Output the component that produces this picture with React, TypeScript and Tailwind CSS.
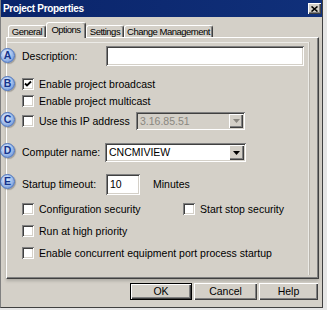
import type { ReactNode } from 'react';

const raised = 'shadow-[inset_1px_1px_0_#ffffff,inset_-1px_-1px_0_#404040,inset_-2px_-2px_0_#808080]';
const sunken = 'shadow-[inset_1px_1px_0_#808080,inset_-1px_-1px_0_#ffffff,inset_2px_2px_0_#404040,inset_-2px_-2px_0_#d4d0c8]';

function Badge({ letter, className }: { letter: string; className: string }) {
  return (
    <div
      className={`absolute left-[-7px] w-[15px] h-[15px] rounded-full border border-[#4a72bd] bg-[radial-gradient(circle_at_40%_35%,#e4eefb_0%,#a9c4ee_45%,#5d86cf_100%)] shadow-[1px_1px_1px_rgba(0,0,0,0.25)] flex items-center justify-center text-[10.5px] font-bold leading-none text-[#15338c] ${className}`}
    >
      {letter}
    </div>
  );
}

function Checkbox({ checked = false }: { checked?: boolean }) {
  return (
    <div className={`w-[12px] h-[12px] shrink-0 bg-white flex items-center justify-center ${sunken}`}>
      {checked && (
        <svg width="8" height="8" viewBox="0 0 8 8">
          <path d="M1 3.5 L3 5.5 L7 1.5" fill="none" stroke="#000" strokeWidth={1.8} />
        </svg>
      )}
    </div>
  );
}

function Arrow({ color }: { color: string }) {
  return (
    <svg width="7" height="4" viewBox="0 0 7 4">
      <polygon points="0,0 7,0 3.5,4" fill={color} />
    </svg>
  );
}

function CheckRow({ label, checked, className = '', children }: { label: string; checked?: boolean; className?: string; children?: ReactNode }) {
  return (
    <div className={`relative flex items-center h-[14px] pl-[15px] ${className}`}>
      {children}
      <Checkbox checked={checked} />
      <span className="ml-[5px] whitespace-nowrap">{label}</span>
    </div>
  );
}

function Tab({ label, active = false, className }: { label: string; active?: boolean; className: string }) {
  return (
    <div
      className={`flex items-center justify-center bg-[#d4d0c8] rounded-t-[3px] border-t border-l border-white border-r border-r-[#404040] shadow-[inset_-1px_0_0_#808080] text-[9.5px] tracking-[-0.5px] whitespace-nowrap ${
        active ? 'h-[16px] -mb-[1px] relative z-10 pb-[2px]' : 'h-[12px]'
      } ${className}`}
    >
      {label}
    </div>
  );
}

export default function App() {
  return (
    <div className="w-[327px] h-[310px] bg-[#e6e6e6] font-['Liberation_Sans',Arial,sans-serif] text-black text-[10.5px] leading-none overflow-hidden">
      <div className="w-[323px] h-[308px] bg-[#d4d0c8] border-l border-l-[#808080] border-r border-r-[#404040] border-b border-b-[#404040] flex flex-col">
        {/* Title bar */}
        <div className="h-[17px] bg-gradient-to-r from-[#0a246a] to-[#10307a] flex items-center justify-between pl-[2px] pr-[1px]">
          <span className="text-white font-bold text-[10px] tracking-[-0.3px]">Project Properties</span>
          <div className={`w-[13px] h-[11px] bg-[#d4d0c8] flex items-center justify-center ${raised}`}>
            <svg width="7" height="6" viewBox="0 0 7 6">
              <path d="M0.5 0.5 L6.5 5.5 M6.5 0.5 L0.5 5.5" stroke="#000" strokeWidth={1.6} />
            </svg>
          </div>
        </div>

        {/* Tabs */}
        <div className="mt-[6px] h-[14px] flex items-end pl-[7px]">
          <Tab label="General" className="w-[38px]" />
          <Tab label="Options" active className="w-[40px]" />
          <Tab label="Settings" className="w-[38px]" />
          <Tab label="Change Management" className="w-[89px]" />
        </div>

        {/* Panel */}
        <div className="ml-[5px] w-[313px] h-[242px] border-t border-l border-white border-r border-b border-r-[#404040] border-b-[#404040] shadow-[inset_-1px_-1px_0_#808080,0_2px_3px_rgba(0,0,0,0.18)] flex flex-col">
          <div className="mt-[4px] mr-[9px] mb-[3px] flex-1 border-t border-r border-[#ecebe7] shadow-[1px_0_0_#b9b5ad] flex flex-col">
            {/* Description */}
            <div className="relative flex items-center h-[20px] mt-[3px] pl-[15px]">
              <Badge letter="A" className="top-[2px]" />
              <span className="w-[84px]">Description:</span>
              <div className={`w-[198px] h-[20px] bg-white ${sunken}`} />
            </div>

            <CheckRow label="Enable project broadcast" checked className="mt-[11px]">
              <Badge letter="B" className="top-[-1px]" />
            </CheckRow>
            <CheckRow label="Enable project multicast" className="mt-[3px]" />

            {/* IP address */}
            <div className="relative flex items-center h-[18px] mt-[4px] pl-[15px]">
              <Badge letter="C" className="top-[0px]" />
              <Checkbox />
              <span className="ml-[5px] w-[97px] whitespace-nowrap">Use this IP address</span>
              <div className={`w-[109px] h-[18px] bg-[#d4d0c8] flex items-center ${sunken}`}>
                <span className="flex-1 pl-[4px] text-[#8a8780]">3.16.85.51</span>
                <div className={`w-[14px] h-[14px] mr-[2px] flex items-center justify-center ${raised}`}>
                  <Arrow color="#8a8780" />
                </div>
              </div>
            </div>

            {/* Computer name */}
            <div className="relative flex items-center h-[19px] mt-[13px] pl-[15px]">
              <Badge letter="D" className="top-[0px]" />
              <span className="w-[83px] whitespace-nowrap">Computer name:</span>
              <div className={`w-[141px] h-[19px] bg-white flex items-center ${sunken}`}>
                <span className="flex-1 pl-[4px]">CNCMIVIEW</span>
                <div className={`w-[15px] h-[15px] mr-[2px] bg-[#d4d0c8] flex items-center justify-center ${raised}`}>
                  <Arrow color="#000" />
                </div>
              </div>
            </div>

            {/* Startup timeout */}
            <div className="relative flex items-center h-[21px] mt-[12px] pl-[15px]">
              <Badge letter="E" className="top-[0px]" />
              <span className="w-[84px] whitespace-nowrap">Startup timeout:</span>
              <div className={`w-[34px] h-[21px] bg-white flex items-center pl-[4px] ${sunken}`}>10</div>
              <span className="ml-[13px]">Minutes</span>
            </div>

            <div className="flex items-center mt-[7px]">
              <CheckRow label="Configuration security" className="w-[176px]" />
              <div className="flex items-center">
                <Checkbox />
                <span className="ml-[5px] whitespace-nowrap">Start stop security</span>
              </div>
            </div>
            <CheckRow label="Run at high priority" className="mt-[8px]" />
            <CheckRow label="Enable concurrent equipment port process startup" className="mt-[8px]" />
          </div>
        </div>

        {/* Buttons */}
        <div className="mt-[4px] flex justify-end gap-[2px] pr-[4px]">
          <div className="w-[62px] h-[17px] border border-black bg-[#d4d0c8] flex items-center justify-center shadow-[inset_1px_1px_0_#ffffff,inset_-1px_-1px_0_#404040,inset_-2px_-2px_0_#808080]">
            OK
          </div>
          <div className={`w-[63px] h-[17px] bg-[#d4d0c8] flex items-center justify-center ${raised}`}>Cancel</div>
          <div className={`w-[59px] h-[17px] bg-[#d4d0c8] flex items-center justify-center ${raised}`}>Help</div>
        </div>
      </div>
    </div>
  );
}
